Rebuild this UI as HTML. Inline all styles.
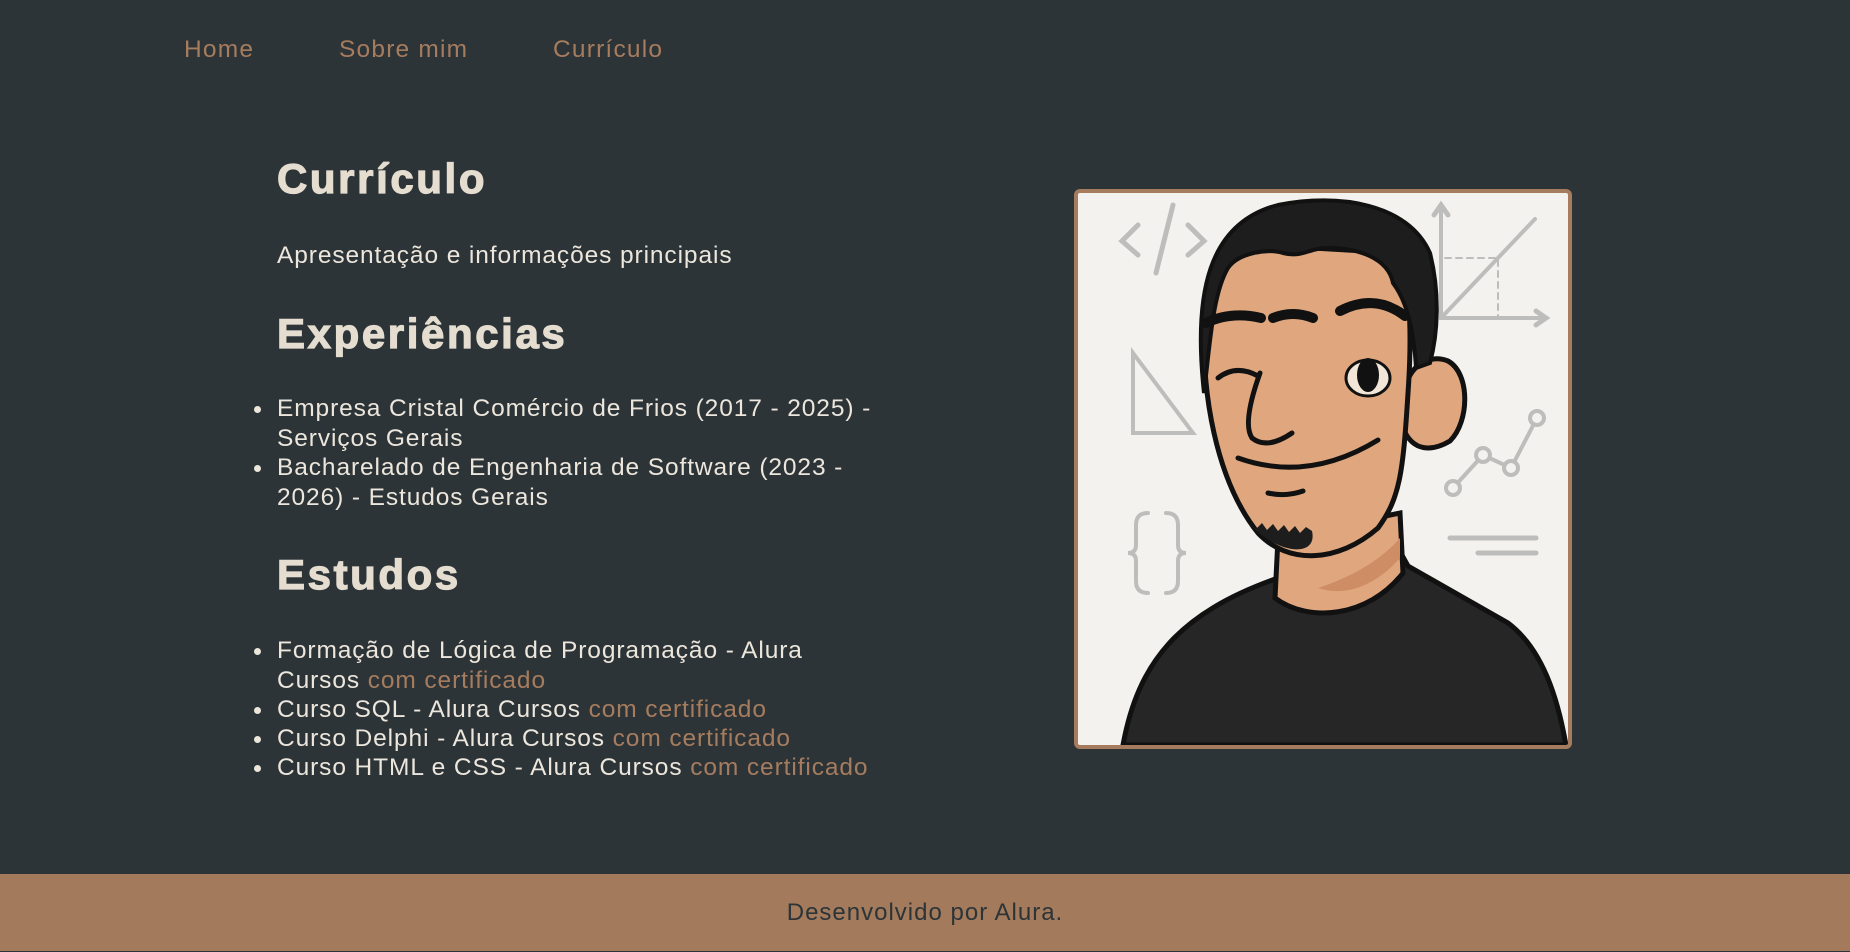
<!DOCTYPE html>
<html><head><meta charset="utf-8"><style>
*{margin:0;padding:0;box-sizing:border-box}
body{width:1850px;height:951px;background:#2c3438;font-family:"Liberation Sans",sans-serif;color:#ece6dc;position:relative;overflow:hidden}
.nav a{position:absolute;top:36px;font-size:24.5px;color:#a67c5e;text-decoration:none;letter-spacing:1.2px}
.t{position:absolute;left:277px;white-space:nowrap}
h1,h2{position:absolute;left:277px;font-weight:bold;color:#e4ddd0;letter-spacing:2.6px;font-size:42px;-webkit-text-stroke:1.2px #e4ddd0}
.li{position:absolute;left:277px;font-size:24.5px;line-height:29.5px;white-space:nowrap;letter-spacing:.9px}
.li::before{content:"";position:absolute;left:-23px;top:12px;width:7px;height:7px;border-radius:50%;background:#ece6dc}
.li.c::before{display:none}
.a{color:#a67c5e}
footer{position:absolute;left:0;top:874px;width:1850px;height:77px;background:#a37b5c;color:#2c3438;font-size:24px;text-align:center;line-height:78px;letter-spacing:1px}
.img{position:absolute;left:1074px;top:189px;width:498px;height:560px;border:4px solid #a67c5e;border-radius:6px;background:#f3f2ee;overflow:hidden}
</style></head><body>
<div class="nav"><a style="left:184px">Home</a><a style="left:339px">Sobre mim</a><a style="left:553px">Currículo</a></div>
<h1 style="top:155px">Currículo</h1>
<div class="t" style="top:242px;font-size:24.5px;letter-spacing:.9px">Apresentação e informações principais</div>
<h2 style="top:310px">Experiências</h2>
<div class="li" style="top:394px">Empresa Cristal Comércio de Frios (2017 - 2025) -</div>
<div class="li c" style="top:424px">Serviços Gerais</div>
<div class="li" style="top:453px">Bacharelado de Engenharia de Software (2023 -</div>
<div class="li c" style="top:483px">2026) - Estudos Gerais</div>
<h2 style="top:551px">Estudos</h2>
<div class="li" style="top:636px">Formação de Lógica de Programação - Alura</div>
<div class="li c" style="top:666px">Cursos <span class="a">com certificado</span></div>
<div class="li" style="top:695px">Curso SQL - Alura Cursos <span class="a">com certificado</span></div>
<div class="li" style="top:724px">Curso Delphi - Alura Cursos <span class="a">com certificado</span></div>
<div class="li" style="top:753px">Curso HTML e CSS - Alura Cursos <span class="a">com certificado</span></div>
<div class="img">
<svg width="490" height="552" viewBox="0 0 490 552">
<g fill="none" stroke="#bdbdbb" stroke-width="5" stroke-linecap="round">
<path d="M60 32 L44 48 L60 62"/><path d="M110 32 L126 48 L110 62"/><path d="M95 12 L78 80"/>
<path d="M55 160 L55 240 L115 240 Z" stroke-width="4"/>
<path d="M70 320 q-12 0 -12 12 v20 q0 8 -8 8 q8 0 8 8 v20 q0 12 12 12" stroke-width="4"/>
<path d="M88 320 q12 0 12 12 v20 q0 8 8 8 q-8 0 -8 8 v20 q0 12 -12 12" stroke-width="4"/>
<path d="M363 12 V125 H468" stroke-width="4"/><path d="M356 22 L363 12 L370 22"/><path d="M458 118 L468 125 L458 132"/>
<path d="M363 125 L457 26" stroke-width="4"/>
<path d="M367 65 H420 V125" stroke-width="2" stroke-dasharray="6 5"/>
<path d="M375 295 L405 262 L433 275 L459 225" stroke-width="4"/>
<circle cx="375" cy="295" r="7" stroke-width="4" fill="#f3f2ee"/><circle cx="405" cy="262" r="7" stroke-width="4" fill="#f3f2ee"/><circle cx="433" cy="275" r="7" stroke-width="4" fill="#f3f2ee"/><circle cx="459" cy="225" r="7" stroke-width="4" fill="#f3f2ee"/>
<path d="M372 345 H458 M400 360 H458" stroke-width="5"/>
</g>
<path d="M45 552 C60 470 100 420 200 385 L205 365 L320 355 L330 373 L430 430 C470 460 482 520 488 552 Z" fill="#262626" stroke="#111" stroke-width="5"/>
<path d="M200 345 L197 405 C230 430 290 425 325 380 L322 320 Z" fill="#e0a77e" stroke="#111" stroke-width="5"/>
<path d="M240 395 C270 405 300 390 322 365 L322 345 C300 370 270 385 240 395 Z" fill="#cf8d66"/>
<path d="M325 235 C335 260 355 258 372 248 C392 228 392 180 370 168 C350 160 330 175 328 195 Z" fill="#e0a77e" stroke="#111" stroke-width="5"/>
<path d="M128 110 C120 200 140 290 180 340 C210 372 260 370 300 335 C322 305 325 280 330 200 C335 130 330 70 320 60 L150 50 Z" fill="#e0a77e" stroke="#111" stroke-width="5"/>
<path d="M126 200 C115 100 130 30 200 12 C260 0 330 10 352 60 C362 100 360 140 352 170 L338 175 C336 140 330 110 315 90 C310 65 280 55 250 55 C230 55 225 65 205 60 C190 55 160 60 150 75 C135 100 132 150 126 200 Z" fill="#1d1d1d" stroke="#111" stroke-width="4"/>
<path d="M128 130 q25 -12 55 -5 M195 125 q20 -8 40 0 M262 118 q35 -18 65 5" stroke="#111" stroke-width="10" stroke-linecap="round" fill="none"/>
<ellipse cx="290" cy="185" rx="22" ry="18" fill="#f1e6d8" stroke="#111" stroke-width="3"/>
<ellipse cx="290" cy="182" rx="11" ry="17" fill="#111"/>
<path d="M140 185 q18 -14 40 -2 M182 180 q-18 50 -8 65 q15 12 40 -5 M160 265 q70 25 140 -18 M190 300 q18 4 35 -2" stroke="#111" stroke-width="5" fill="none" stroke-linecap="round"/>
<path d="M170 330 l8 6 6 -6 5 7 6 -6 5 7 6 -6 5 7 6 -6 5 7 6 -6 6 4 C240 365 200 362 170 330 Z" fill="#1d1d1d"/>
</svg></div>
<footer>Desenvolvido por Alura.</footer>
</body></html>
